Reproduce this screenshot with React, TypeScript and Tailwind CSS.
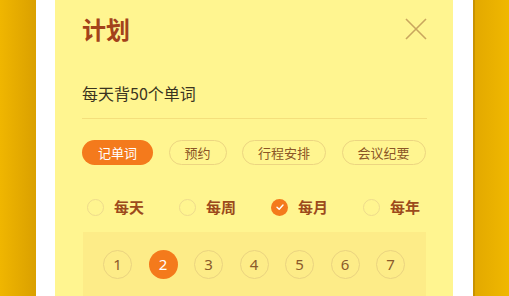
import React from "react";

const chips = ["记单词", "预约", "行程安排", "会议纪要"];
const freqs = ["每天", "每周", "每月", "每年"];
const nums = [1, 2, 3, 4, 5, 6, 7];

export default function App() {
  return (
    <div
      className="flex w-[509px] h-[296px] overflow-hidden"
      style={{ fontFamily: '"Noto Sans CJK SC", "Noto Sans", sans-serif' }}
    >
      <div className="w-[36px] shrink-0 bg-gradient-to-r from-[#f0b600] to-[#daa000]" />
      <div className="w-[19px] shrink-0 bg-white" />
      <div className="w-[398px] shrink-0 bg-[#fff590] pl-[27px] pr-[26px] pt-[14px]">
        <div className="flex items-start justify-between">
          <div className="text-[24px] leading-[30px] font-bold text-[#a3421b]">计划</div>
          <svg width="24" height="24" viewBox="0 0 24 24" className="mt-[3px] mr-[-1px]">
            <path d="M2 2 L22 22 M22 2 L2 22" stroke="#c9a65e" strokeWidth="1.6" fill="none" />
          </svg>
        </div>
        <div className="mt-[37px] text-[16px] leading-[24px] text-[#3a3320]">每天背50个单词</div>
        <div className="mt-[13px] h-[1px] bg-[#f4df7c]" />
        <div className="mt-[21px] flex gap-[15.5px]">
          {chips.map((c, i) => (
            <div
              key={c}
              className={
                i === 0
                  ? "h-[25px] px-[16px] rounded-full bg-[#f47a1c] text-white text-[13px] leading-[25px]"
                  : "h-[25px] px-[15px] rounded-full border border-[#ecd581] text-[#8b5526] text-[13px] leading-[23px]"
              }
            >
              {c}
            </div>
          ))}
        </div>
        <div className="mt-[32px] flex pl-[5px]">
          {freqs.map((f, i) => (
            <div key={f} className="w-[92px] shrink-0 flex items-center gap-[10px]">
              {i === 2 ? (
                <div className="w-[17px] h-[17px] rounded-full bg-[#f47a1c] flex items-center justify-center">
                  <svg width="10" height="10" viewBox="0 0 10 10">
                    <path d="M2 5.2 L4.2 7.3 L8 3" stroke="white" strokeWidth="1.4" fill="none" strokeLinecap="round" strokeLinejoin="round" />
                  </svg>
                </div>
              ) : (
                <div className="w-[17px] h-[17px] rounded-full border border-[#eedb8c]" />
              )}
              <span className="text-[15px] leading-[20px] font-bold text-[#9c4a1c]">{f}</span>
            </div>
          ))}
        </div>
        <div className="mt-[15px] ml-[1px] mr-[1px] h-[80px] bg-[#fdec88] pl-[20px] pt-[18px]">
          <div className="flex gap-[16.5px]">
            {nums.map((n) => (
              <div
                key={n}
                className={
                  n === 2
                    ? "w-[29px] h-[29px] rounded-full bg-[#f47a1c] text-white text-[15px] flex items-center justify-center"
                    : "w-[29px] h-[29px] rounded-full border border-[#ead380] text-[#8b5a2a] text-[15px] flex items-center justify-center"
                }
                style={{ fontFamily: '"Noto Sans", sans-serif' }}
              >
                {n}
              </div>
            ))}
          </div>
        </div>
      </div>
      <div className="w-[20px] shrink-0 bg-white" />
      <div className="w-[2px] shrink-0 bg-[#c89200]" />
      <div className="flex-1 bg-gradient-to-r from-[#e3a900] to-[#f0b800]" />
    </div>
  );
}
